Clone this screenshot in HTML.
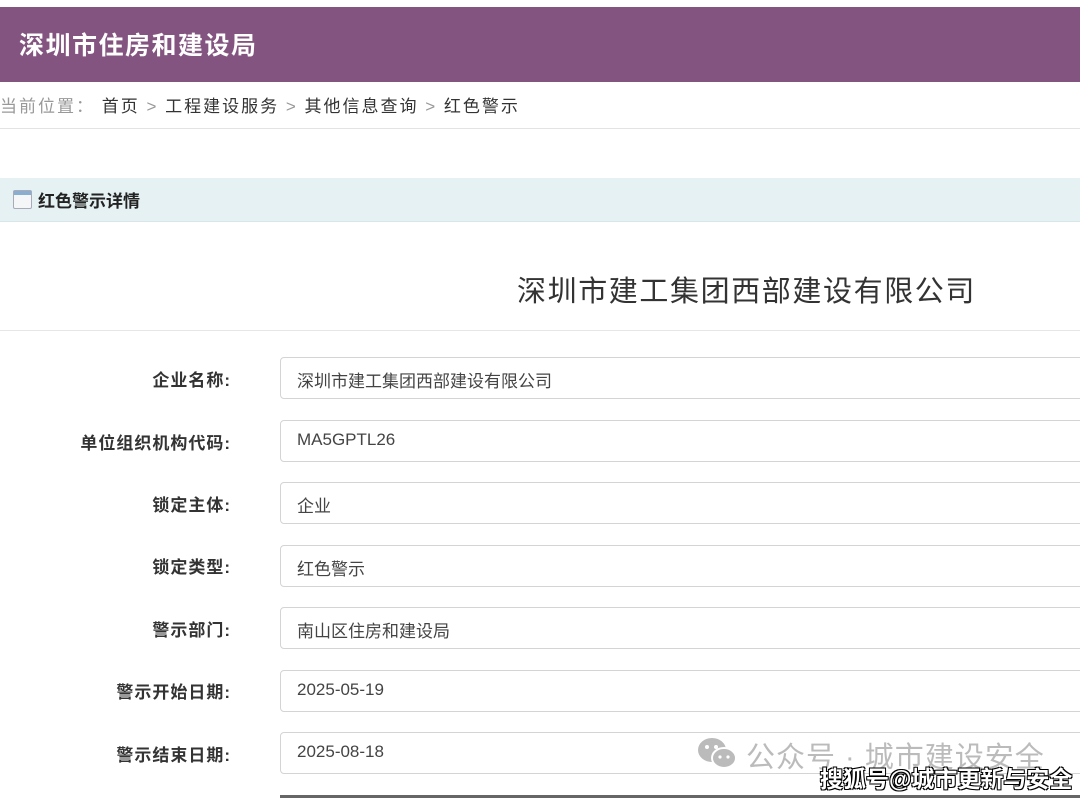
<!DOCTYPE html>
<html><head><meta charset="utf-8"><style>
body{margin:0;width:1080px;height:798px;overflow:hidden;background:#fff;font-family:"Liberation Sans","Noto Sans CJK SC",sans-serif;position:relative}
.hd{position:absolute;top:7px;left:0;width:1080px;height:75px;background:#845480}
.hd span{position:absolute;left:19px;top:19px;color:#fff;font-size:25px;font-weight:bold;letter-spacing:1.5px}
.bc{position:absolute;top:92px;left:0;font-size:17px;color:#333;letter-spacing:2px;white-space:pre}
.bc .g{color:#999}
.l1{position:absolute;top:128px;left:0;width:1080px;height:1px;background:#e3e3e3}
.sec{position:absolute;top:178px;left:0;width:1080px;height:43px;background:#e6f1f3;border-bottom:1px solid #d8e6ea}
.sec span{position:absolute;left:38px;top:9px;font-size:17px;font-weight:bold;color:#222}
.ic{position:absolute;left:13px;top:12px;width:17px;height:17px;border:1px solid #aab;border-radius:2px;background:#f4f6f8}
.ic:before{content:"";position:absolute;left:0;right:0;top:0;height:4px;background:#8aaed0}
.t{position:absolute;top:268px;left:517px;font-size:29px;color:#333;letter-spacing:1.6px}
.l2{position:absolute;top:330px;left:0;width:1080px;height:1px;background:#e6e6e6}
.lb{position:absolute;right:849px;font-size:17px;font-weight:bold;color:#333;text-align:right;white-space:nowrap;letter-spacing:1px}
.in{position:absolute;left:280px;width:820px;height:42px;border:1px solid #d4d4d4;border-radius:4px;box-sizing:border-box;font-size:17px;color:#444;padding:9px 16px}
.wm{position:absolute;left:746px;top:734px;font-size:29px;color:#bbb;letter-spacing:1px}
.wm2{position:absolute;left:820px;top:760px;font-size:23px;color:#fff;font-weight:bold;text-shadow:1px 1px 0 #000,-1px -1px 0 #000,1px -1px 0 #000,-1px 1px 0 #000}
</style></head><body>
<div class="hd"><span>深圳市住房和建设局</span></div>
<div class="bc"><span class="g">当前位置：</span> 首页 <span class="g">&gt;</span> 工程建设服务 <span class="g">&gt;</span> 其他信息查询 <span class="g">&gt;</span> 红色警示</div>
<div class="l1"></div>
<div class="sec"><div class="ic"></div><span>红色警示详情</span></div>
<div class="t">深圳市建工集团西部建设有限公司</div>
<div class="l2"></div>
<div class="lb" style="top:366px">企业名称:</div><div class="in" style="top:357px">深圳市建工集团西部建设有限公司</div>
<div class="lb" style="top:429px">单位组织机构代码:</div><div class="in" style="top:420px">MA5GPTL26</div>
<div class="lb" style="top:491px">锁定主体:</div><div class="in" style="top:482px">企业</div>
<div class="lb" style="top:553px">锁定类型:</div><div class="in" style="top:545px">红色警示</div>
<div class="lb" style="top:616px">警示部门:</div><div class="in" style="top:607px">南山区住房和建设局</div>
<div class="lb" style="top:678px">警示开始日期:</div><div class="in" style="top:670px">2025-05-19</div>
<div class="lb" style="top:741px">警示结束日期:</div><div class="in" style="top:732px">2025-08-18</div>
<div style="position:absolute;left:280px;top:795px;width:800px;height:3px;background:#666"></div>
<svg style="position:absolute;left:697px;top:737px" width="42" height="34" viewBox="0 0 42 34"><ellipse cx="15" cy="13" rx="14" ry="12" fill="#bbb"/><ellipse cx="27" cy="21" rx="12" ry="10" fill="#bbb" stroke="#fff" stroke-width="2"/><circle cx="10" cy="10" r="2" fill="#fff"/><circle cx="19" cy="10" r="2" fill="#fff"/><circle cx="23" cy="20" r="1.6" fill="#fff"/><circle cx="31" cy="20" r="1.6" fill="#fff"/></svg>
<div class="wm">公众号 · 城市建设安全</div>
<div class="wm2">搜狐号@城市更新与安全</div>
</body></html>
